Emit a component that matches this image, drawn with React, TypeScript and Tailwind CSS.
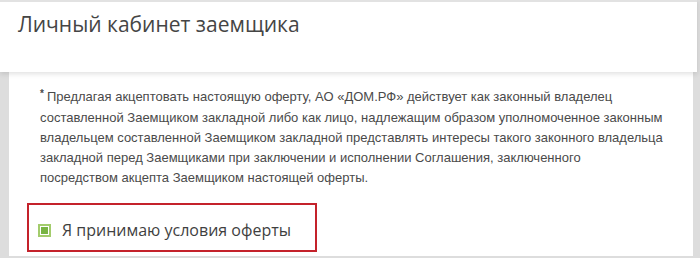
export default function App() {
  const lines = [
    "составленной Заемщиком закладной либо как лицо, надлежащим образом уполномоченное законным",
    "владельцем составленной Заемщиком закладной представлять интересы такого законного владельца",
    "закладной перед Заемщиками при заключении и исполнении Соглашения, заключенного",
    "посредством акцепта Заемщиком настоящей оферты.",
  ];
  return (
    <div className="w-[700px] h-[258px] overflow-hidden bg-[#dddddd] flex flex-col">
      <div className="relative z-10 h-[72px] w-[697px] shrink-0 bg-white border-t-2 border-[#e2e2e2] shadow-[0_2px_5px_rgba(0,0,0,0.12)]">
        <h1 className="pl-[18px] pt-[7px] text-[21px] leading-[30px] text-[#454545] font-['Open_Sans',sans-serif]">
          Личный кабинет заемщика
        </h1>
      </div>
      <div className="ml-[9px] w-[684px] h-[184px] shrink-0 bg-white pl-[31px] pt-[15px] font-['Liberation_Sans',sans-serif] text-[#4a4a4a]">
        <div className="text-[13px] leading-[20px] whitespace-nowrap">
          <div>
            <span className="relative top-[-4px] text-[10px] font-bold mr-[3px]">*</span>
            Предлагая акцептовать настоящую оферту, АО «ДОМ.РФ» действует как законный владелец
          </div>
          {lines.map((l) => (
            <div key={l}>{l}</div>
          ))}
        </div>
        <div className="mt-[15px] -ml-[13px] w-[290px] h-[49px] border-2 border-[#c4222b] flex items-center pl-[9px] pt-[5px]">
          <div className="w-[13px] h-[13px] border-2 border-[#a3cc6c] bg-white flex items-center justify-center">
            <div className="w-[7px] h-[7px] bg-[#78b443]" />
          </div>
          <span className="ml-[11px] text-[16px] text-[#3f3f3f] font-['Open_Sans',sans-serif]">
            Я принимаю условия оферты
          </span>
        </div>
      </div>
    </div>
  );
}
